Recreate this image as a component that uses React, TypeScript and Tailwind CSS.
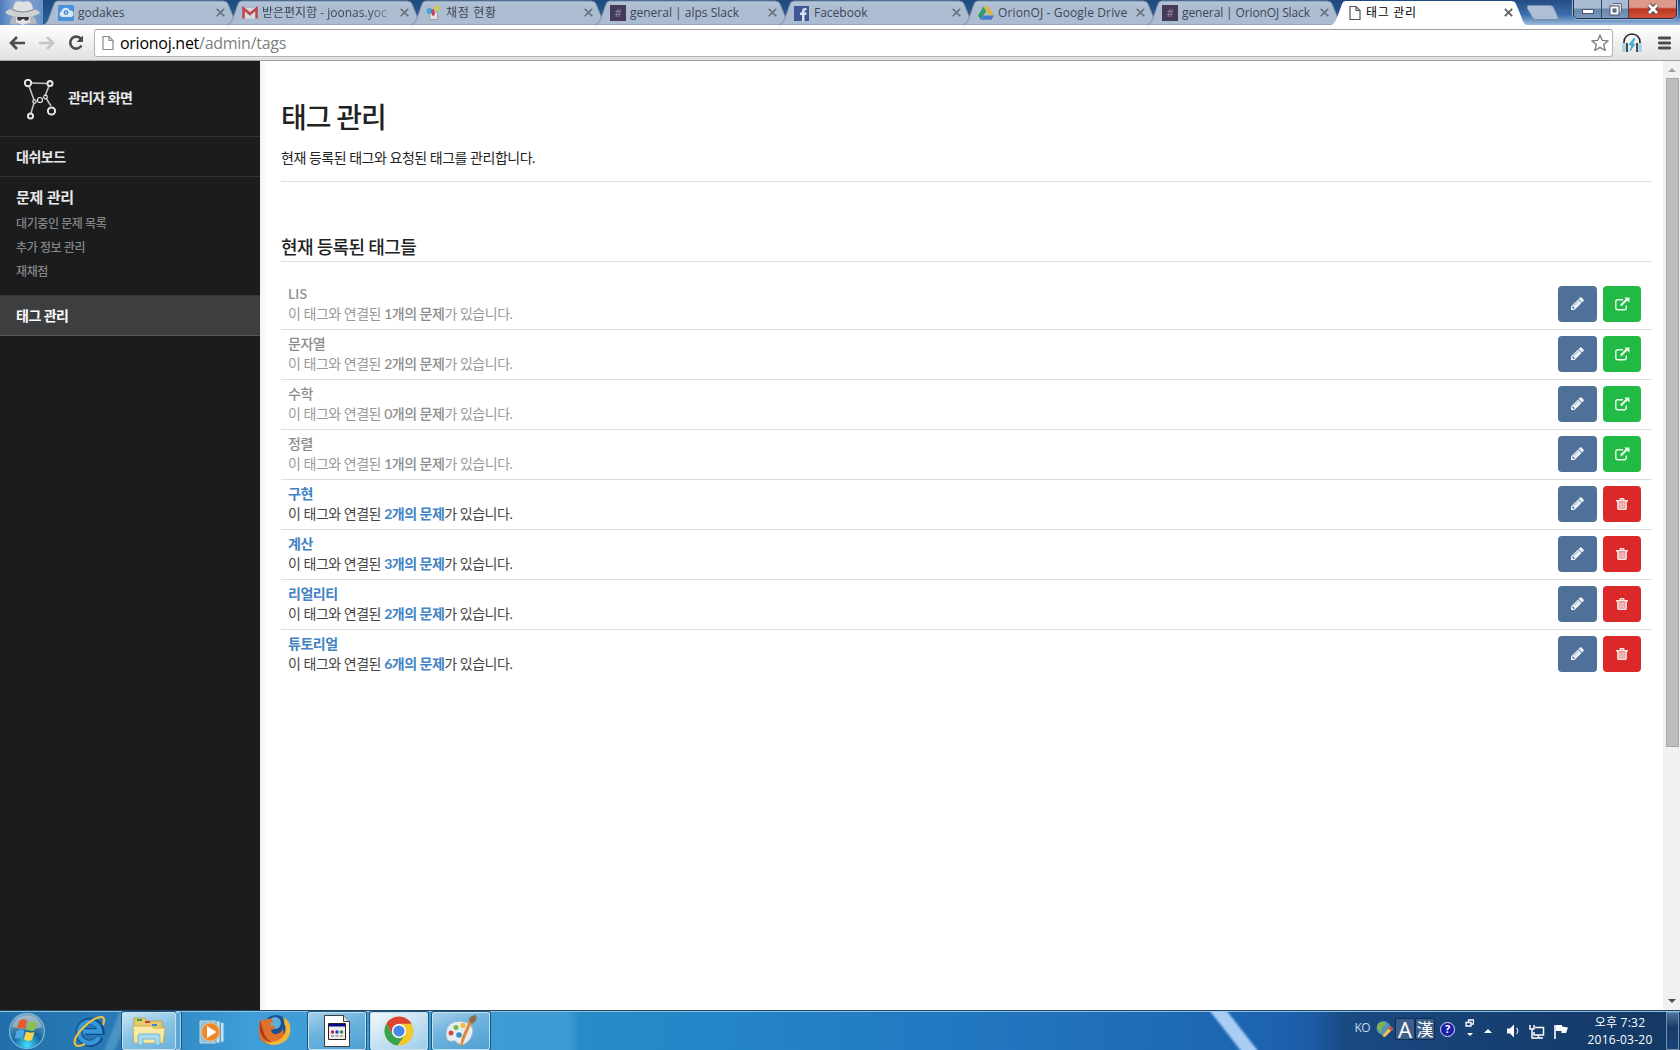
import React from "react";

type Tab = { title: string; icon: React.ReactNode; active?: boolean };

const ui = "font-['Open_Sans','Noto_Sans_CJK_KR',sans-serif]";

function SlackIcon() {
  return (
    <div className="flex h-4 w-4 items-center justify-center bg-[#453a58] text-[11px] leading-4 text-[#9d98b3]">#</div>
  );
}

function PageIcon({ dark }: { dark?: boolean }) {
  return (
    <svg width="12" height="16" viewBox="0 0 12 16" fill="#fff" stroke={dark ? "#555" : "#8a8a8a"} strokeWidth="1.2">
      <path d="M1 1.5h6L11 5.5V14.5H1zM7 1.5V5.5H11" />
    </svg>
  );
}

const tabs: Tab[] = [
  {
    title: "godakes",
    icon: (
      <svg width="16" height="16" viewBox="0 0 16 16">
        <rect width="16" height="16" rx="1.5" fill="#4a90dc" />
        <path d="M4 12a3 3 0 0 1-.5-5.800A4.500 4.500 0 0 1 12 5.500a3.200 3.200 0 0 1 .5 6.500z" fill="#d8e6f4" />
        <circle cx="8" cy="7.500" r="2.300" fill="#3f7fca" />
        <circle cx="8" cy="7.500" r="1" fill="#d8e6f4" />
      </svg>
    ),
  },
  {
    title: "받은편지함 - joonas.yoc",
    icon: (
      <svg width="16" height="16" viewBox="0 0 16 16">
        <path d="M1.500 3h13v10.500h-13z" fill="#d5dae2" />
        <path d="M1.500 13.500V3.500L8 9l6.500-5.500v10" fill="none" stroke="#bd4647" strokeWidth="2.500" />
      </svg>
    ),
  },
  {
    title: "채점 현황",
    icon: (
      <svg width="16" height="16" viewBox="0 0 16 16">
        <path d="M3 7h8.500v7.500H4z" fill="#dfe2e6" stroke="#a09c9c" />
        <circle cx="3.500" cy="6" r="3" fill="#40a9df" />
        <circle cx="11" cy="3" r="2.500" fill="#d4cf35" />
        <path d="M5 5l3-1 1 6-3 1z" fill="#cb3f4e" />
      </svg>
    ),
  },
  { title: "general | alps Slack", icon: <SlackIcon /> },
  {
    title: "Facebook",
    icon: (
      <svg width="16" height="16" viewBox="0 0 16 16">
        <rect y="1" width="15" height="15" fill="#3f5798" />
        <path d="M8 16V10H6V7.500h2V6c0-2.300 1.500-3.300 4.500-3v2.300c-1.600 0-2 .1-2 1v1.200h2l-.3 2.500h-1.700v6z" fill="#dbe2ee" />
      </svg>
    ),
  },
  {
    title: "OrionOJ - Google Drive",
    icon: (
      <svg width="16" height="16" viewBox="0 0 16 16">
        <path d="M5.500 1.500 0 10.500l2.700 4.300L8.200 6z" fill="#2f9c6b" />
        <path d="M5.500 1.500h5L16 10.300h-5.300z" fill="#d9b440" />
        <path d="M5.500 10.500H16l-2.700 4.300H2.700z" fill="#4779d4" />
      </svg>
    ),
  },
  { title: "general | OrionOJ Slack", icon: <SlackIcon /> },
  { title: "태그 관리", icon: <PageIcon dark />, active: true },
];

const tabTracking: Record<string, string> = {
  "받은편지함 - joonas.yoc": "[mask-image:linear-gradient(to_right,#000_105px,rgba(0,0,0,0.25)_131px)]",
  "채점 현황": "tracking-[0.7px]",
  "OrionOJ - Google Drive": "tracking-[0.13px]",
  "general | OrionOJ Slack": "tracking-[-0.12px]",
  "태그 관리": "tracking-[0.7px]",
};

function BrowserTab({ tab }: { tab: Tab }) {
  return (
    <div className="relative h-[25px] w-[184px] shrink-0">
      <svg className="absolute left-0 top-0" width="196" height="25" viewBox="0 0 196 25">
        <defs>
          <linearGradient id="tabfill" x1="0" y1="0" x2="0" y2="1">
            <stop offset="0" stopColor="#b6c6da" />
            <stop offset=".25" stopColor="#adbdd1" />
            <stop offset="1" stopColor="#abbbd2" />
          </linearGradient>
        </defs>
        <path
          d="M0 25C4 24 5 20 7 15L11 4Q12 1 15 1H180Q184 1 185 4L190 16C192 22 193 24 196 25z"
          fill={tab.active ? "#fff" : "url(#tabfill)"}
          stroke={tab.active ? "none" : "#7f8da2"}
          strokeWidth="1"
        />
      </svg>
      <div className={`${ui} relative flex h-[25px] items-center pl-[15px] text-[12px]`}>
        <div className="flex w-5 shrink-0 items-center">
          <div className={tab.active ? "pl-[3px]" : ""}>{tab.icon}</div>
        </div>
        <div
          className={`w-[133px] whitespace-nowrap pt-px leading-6 ${tab.active ? "text-black" : "text-[#3d4756]"} ${
            tabTracking[tab.title] ?? ""
          }`}
        >
          {tab.title}
        </div>
        <svg className="ml-[5px] shrink-0" width="9" height="9" viewBox="0 0 9 9">
          <path d="M.8.800l7.400 7.400M8.200.800L.8 8.200" stroke={tab.active ? "#5e5e5e" : "#6a7482"} strokeWidth="1.700" />
        </svg>
      </div>
    </div>
  );
}

function TabStrip() {
  return (
    <div className="relative flex h-[25px] bg-[linear-gradient(180deg,#1d4a80,#2a609b)]">
      <div className="w-[43px] shrink-0 bg-[linear-gradient(90deg,#4e7cba,#86a7d4_35%,#6a92c8)] pl-[5px]">
        <svg width="36" height="25" viewBox="0 0 36 25">
          <path d="M5 24q0-6 5-9h16q5 3 6 9z" fill="#b4b7bb" />
          <path d="M0 13q2-4 8-4 9 3 20 0 6 1 7 4-5 4-17 4T0 13z" fill="#cfd1d3" />
          <path d="M8 9Q9 2 13 1l5 1 5-1q4 1 5 8-10 5-20 0z" fill="#dfe0e1" />
          <path d="M7 9.500q10 5 22 0" stroke="#8e9298" strokeWidth="1.200" fill="none" />
          <path d="M11 17h14v5l-7 3-7-3z" fill="#e4e5e6" />
          <path d="M12 17h12l-.5 3q-3.500 2-4.500-1h-2q-1 3-4.500 1z" fill="#36383c" />
        </svg>
      </div>
      {tabs.map((t) => (
        <BrowserTab key={t.title} tab={t} />
      ))}
      <div className="flex flex-1 justify-between bg-[linear-gradient(180deg,#234c82,#3d6fae_60%,#9dbbdc)] pl-[8px]">
        <svg className="ml-1 mt-[5px]" width="32" height="16" viewBox="0 0 32 16">
          <path d="M1 .5h22q3 0 4 3l4 9q1 2-2 2H9q-3 0-4-3L0 3Q0 .5 1 .5z" fill="#afc0d6" stroke="#7a8ca6" />
        </svg>
        <div className="mr-[3px] flex h-[19px] overflow-hidden rounded-b-[5px] border border-t-0 border-[#1f2e45] shadow-[0_0_0_1px_#9fb6d2]">
          <div className="flex w-[28px] items-center justify-center border-r border-[#33455f] bg-[linear-gradient(180deg,#a9bcd3_45%,#6a86aa_50%,#7b9ac0)]">
            <svg width="12" height="5" viewBox="0 0 12 5" className="mt-1">
              <rect x=".5" y=".5" width="11" height="4" fill="#fff" stroke="#4b556a" />
            </svg>
          </div>
          <div className="flex w-[27px] items-center justify-center border-r border-[#33455f] bg-[linear-gradient(180deg,#a9bcd3_45%,#6a86aa_50%,#7b9ac0)]">
            <svg width="13" height="13" viewBox="0 0 13 13" fill="none">
              <path d="M4 2h7v7" stroke="#4b556a" strokeWidth="3.400" />
              <path d="M4 2h7v7" stroke="#fff" strokeWidth="1.600" />
              <rect x="2.500" y="4.500" width="6" height="6" stroke="#4b556a" strokeWidth="4" />
              <rect x="2.500" y="4.500" width="6" height="6" stroke="#fff" strokeWidth="2" />
            </svg>
          </div>
          <div className="flex w-[47px] items-center justify-center bg-[linear-gradient(180deg,#dd9a8b_40%,#bd3620_50%,#d0533a)]">
            <svg width="14" height="12" viewBox="0 0 14 12">
              <path d="M3 2l8 8M11 2l-8 8" stroke="#56424b" strokeWidth="4.800" />
              <path d="M3 2l8 8M11 2l-8 8" stroke="#fff" strokeWidth="2.800" />
            </svg>
          </div>
        </div>
      </div>
    </div>
  );
}

function Toolbar() {
  return (
    <div className="flex h-9 items-center border-b border-[#a0a0a0] bg-[linear-gradient(180deg,#fff,#e1e1e1)]">
      <svg className="ml-[9px]" width="17" height="14" viewBox="0 0 17 14" fill="none" stroke="#4c4c4c" strokeWidth="2.600">
        <path d="M16 7H3M8 1L2 7l6 6" />
      </svg>
      <svg className="ml-[13px]" width="17" height="14" viewBox="0 0 17 14" fill="none" stroke="#c6c6c6" strokeWidth="2.600">
        <path d="M0 7h13M8 1l6 6-6 6" />
      </svg>
      <svg className="ml-[12px]" width="16" height="16" viewBox="0 0 16 16">
        <path d="M13 4A6 6 0 1 0 13.500 10.500" fill="none" stroke="#4c4c4c" strokeWidth="2.600" />
        <path d="M15 .5V7H8.500z" fill="#4c4c4c" />
      </svg>
      <div className={`${ui} ml-[10px] flex h-7 w-[1519px] items-center rounded-[3px] border border-[#b5b5b5] border-t-[#a0a0a0] bg-white pl-[7px] text-[16px] text-black`}>
        <PageIcon />
        <div className="ml-[6px] flex-1 leading-6 tracking-[-0.27px]">
          orionoj.net<span className="text-[#808080]">/admin/tags</span>
        </div>
        <svg className="mr-[3px]" width="18" height="18" viewBox="0 0 18 18" fill="#fff" stroke="#7b7b7b" strokeWidth="1.300" strokeLinejoin="round">
          <path d="M9 1l2.300 5.400 5.900.4-4.500 3.800 1.500 5.900L9 13.400l-5.200 3.100 1.500-5.900L.8 6.800l5.900-.4z" />
        </svg>
      </div>
      <svg className="ml-[9px]" width="20" height="20" viewBox="0 0 20 20" fill="none">
        <path d="M2 11V9a8 8 0 0 1 16 0v2" stroke="#222" strokeWidth="1.500" />
        <path d="M2 10v9M18 10v9" stroke="#a6d3e8" strokeWidth="3.500" />
        <path d="M5 10v9M15 10v9" stroke="#222" strokeWidth="1.600" />
        <path d="M12 5L7 12h3l-2 6 5-7h-3l3-5z" fill="#48add0" stroke="#48add0" />
      </svg>
      <svg className="ml-[16px]" width="13" height="14" viewBox="0 0 13 14" stroke="#4d4d4d" strokeWidth="2.800" strokeLinecap="round">
        <path d="M1.300 2h10.400M1.300 7h10.400M1.300 12h10.400" />
      </svg>
    </div>
  );
}

const body = "font-['Lato','Noto_Sans_CJK_KR',sans-serif]";

function Sidebar() {
  return (
    <div className="w-[260px] shrink-0 bg-[#1b1c1d] text-[14px] font-bold text-[#e9e9e9]">
      <div className="flex h-[76px] items-center border-b border-[#2f3031] pl-6">
        <svg className="mt-[2px]" width="33" height="42" viewBox="0 0 33 42" fill="none" stroke="#e8e8e8" strokeWidth="1.600">
          <path d="M7 4l17 .5M5 7l5 14M25 7l-4 10M10 24L7 34M22 19l5 8" stroke="#c0c0c0" />
          <circle cx="4" cy="4" r="3.200" strokeWidth="2" />
          <circle cx="26" cy="4.500" r="2.500" strokeWidth="2" />
          <circle cx="10.500" cy="22.500" r="1.700" strokeWidth="1.200" />
          <circle cx="16" cy="21" r="2.500" strokeWidth="1.200" />
          <circle cx="21.500" cy="18" r="1.800" strokeWidth="1.200" />
          <circle cx="27.500" cy="32" r="3.600" strokeWidth="2" />
          <circle cx="6.500" cy="37" r="2.500" strokeWidth="2" />
        </svg>
        <span className="-mt-[2px] ml-[11px] tracking-[-0.6px]">관리자 화면</span>
      </div>
      <div className="flex h-10 items-center border-b border-[#2f3031] pl-4 tracking-[-0.5px]">대쉬보드</div>
      <div className="h-[119px] border-b border-[#353637] pl-4 pt-[8px]">
        <div className="text-[15px] leading-6 tracking-[-0.2px]">문제 관리</div>
        <div className="mt-[3px] text-[12px] font-medium leading-6 tracking-[-0.4px] text-[#858586]">
          <div>대기중인 문제 목록</div>
          <div>추가 정보 관리</div>
          <div>재채점</div>
        </div>
      </div>
      <div className="flex h-10 items-center border-b border-[#58595a] bg-[#3d3e3f] pl-4 tracking-[-0.5px] text-white">태그 관리</div>
    </div>
  );
}

const rows = [
  { name: "LIS", count: 1, on: false },
  { name: "문자열", count: 2, on: false },
  { name: "수학", count: 0, on: false },
  { name: "정렬", count: 1, on: false },
  { name: "구현", count: 2, on: true },
  { name: "계산", count: 3, on: true },
  { name: "리얼리티", count: 2, on: true },
  { name: "튜토리얼", count: 6, on: true },
];

function TagRow({ row, last }: { row: (typeof rows)[number]; last: boolean }) {
  const link = row.on ? "font-bold text-[#4183c4]" : "font-medium text-[#8c8c8c]";
  return (
    <div className={`flex h-[50px] items-center border-b pb-[2px] pl-[7px] pr-[11px] ${last ? "border-transparent" : "border-[#dcdddd]"}`}>
      <div className={`flex-1 text-[14px] leading-5 tracking-[-0.48px] ${row.on ? "text-[#444]" : "text-[#999]"}`}>
        <div className={`${link} ${row.name === "LIS" ? "tracking-[0.1px]" : ""}`}>{row.name}</div>
        <div>
          이 태그와 연결된 <span className={link}>{row.count}개의 문제</span>가 있습니다.
        </div>
      </div>
      <div className="flex h-9 w-[39px] items-center justify-center rounded-[4px] bg-[#4f7199]">
        <svg width="13" height="13" viewBox="0 0 1536 1536" fill="#eef2f6">
          <path d="M363 1408l91-91-235-235-91 91v107h128v128h107zM886 480q0-22-22-22-10 0-17 7L305 1007q-7 7-7 17 0 22 22 22 10 0 17-7l542-542q7-7 7-17zM832 288l416 416-832 832H0v-416zM1515 384q0 53-37 90l-166 166-416-416 166-165q36-38 90-38 53 0 91 38l235 234q37 39 37 91z" />
        </svg>
      </div>
      <div className={`ml-[6px] flex h-9 w-[38px] items-center justify-center rounded-[4px] ${row.on ? "bg-[#db2828]" : "bg-[#21ba45]"}`}>
        {row.on ? (
          <svg width="12" height="12" viewBox="0 0 12 12" fill="none" stroke="#fbeaea">
            <path d="M0 2.700h12M3.800 2.500l.7-1.800h3l.7 1.800" strokeWidth="1.400" />
            <path d="M1.900 3V10.300q0 1.100 1.100 1.100h6q1.100 0 1.100-1.100V3" strokeWidth="1.500" fill="#ee9090" />
            <path d="M4.200 4.500v5.500M6 4.500v5.500M7.800 4.500v5.500" strokeWidth=".7" />
          </svg>
        ) : (
          <svg width="15" height="14" viewBox="0 0 15 14" fill="none" stroke="#eefaf0">
            <path d="M8 2.700H2.800Q.8 2.700.8 4.700v6q0 2 2 2h6.500q2 0 2-2V8.500" strokeWidth="1.400" />
            <path d="M5.800 8.500l6-6" strokeWidth="2.200" />
            <path d="M9.300.5H14.500V5.700z" fill="#eefaf0" stroke="none" />
          </svg>
        )}
      </div>
    </div>
  );
}

function Content() {
  return (
    <div className="flex-1 bg-[linear-gradient(90deg,#f4f4f4,#fff_8px)] pl-[21px] pr-[11px] text-[#222]">
      <div className="h-[121px] border-b border-[#dcdddd] pt-[36px]">
        <h1 className="text-[28px] font-medium leading-[40px] tracking-[-1.1px]">태그 관리</h1>
        <p className="mt-[11px] text-[14px] leading-5 tracking-[-0.48px]">현재 등록된 태그와 요청된 태그를 관리합니다.</p>
      </div>
      <h2 className="mb-[18px] flex h-20 items-end border-b border-[#dcdddd] pb-px text-[18px] font-medium leading-[26px] tracking-[-0.65px]">현재 등록된 태그들</h2>
      {rows.map((r, i) => (
        <TagRow key={r.name} row={r} last={i === rows.length - 1} />
      ))}
    </div>
  );
}

function Scrollbar() {
  return (
    <div className="flex w-[17px] shrink-0 flex-col items-center justify-between bg-[#f1f1f1] pl-px">
      <div className="flex h-[17px] items-center">
        <svg width="8" height="4" viewBox="0 0 8 4"><path d="M0 4l4-4 4 4z" fill="#a3a3a3" /></svg>
      </div>
      <div className="h-[669px] w-[13px] border border-[#a8a8a8] bg-[#bcbcbc]" />
      <div className="flex-1" />
      <div className="flex h-[19px] items-center">
        <svg width="8" height="4" viewBox="0 0 8 4"><path d="M0 0h8L4 4z" fill="#505050" /></svg>
      </div>
    </div>
  );
}

const taskButton =
  "flex h-[38px] items-center justify-center rounded-[2px] border border-[#c3e0f1] shadow-[0_0_0_1px_#1f5680]";

function Taskbar() {
  return (
    <div className="relative flex h-10 items-start overflow-hidden border-t border-[#24465f] bg-[linear-gradient(90deg,#236fab_0px,#287bb7_120px,#3f9ed7_250px,#3b9bd2_568px,#288bc8_580px,#2383c6_760px,#227ac2_920px,#2070ba_1080px,#1d64b0_1260px,#1c5ca6_1310px,#194a82_1345px,#163f72_1500px,#133864)] shadow-[inset_0_1px_0_#8fc0e0]">
      <svg className="absolute left-0 top-0" width="1680" height="40" viewBox="0 0 1680 40">
        <defs>
          <filter id="soft" x="-20%" y="-20%" width="140%" height="140%">
            <feGaussianBlur stdDeviation="1.3" />
          </filter>
        </defs>
        <path d="M1206 -5h17l39 50h-17z" fill="#a8cef5" filter="url(#soft)" />
        <path d="M120 0l-16 40h10L132 0z" fill="#7bb9dc" opacity=".4" filter="url(#soft)" />
      </svg>
      <div className="relative flex h-10 w-full items-start pt-px">
        <svg className="ml-2" width="38" height="38" viewBox="0 0 38 38">
          <defs>
            <radialGradient id="orb" cx=".5" cy=".9" r=".9">
              <stop offset="0" stopColor="#3fe0ff" />
              <stop offset=".45" stopColor="#15689f" />
              <stop offset="1" stopColor="#8fa9bd" />
            </radialGradient>
          </defs>
          <circle cx="19" cy="19" r="17.500" fill="url(#orb)" stroke="#6fb5d6" strokeWidth="1.300" />
          <path d="M4 15a15.500 15.500 0 0 1 30 0q-15 6-30 0z" fill="#dce6ec" opacity=".4" />
          <path d="M11 9q4-3 8-.5L17 17q-4-2-8 0z" fill="#e8592b" />
          <path d="M20.500 9q4 2.500 9 .5L27 18q-4 2-8.500-.5z" fill="#8fc04a" />
          <path d="M8.500 19q4-2.500 8-.5l-2 8.500q-4-2-8 0z" fill="#4ea6e2" />
          <path d="M18 19.500q4 2 8.500.5L24 28q-4 2-8-.5z" fill="#fbd24a" />
        </svg>
        <svg className="ml-[26px] mt-1" width="34" height="32" viewBox="0 0 34 32">
          <path d="M28 21A11 11 0 1 1 29 15.500H13" fill="none" stroke="#124d84" strokeWidth="7" />
          <path d="M27 21A10.500 10.500 0 1 1 28 15.500H11" fill="none" stroke="#3497dc" strokeWidth="4.500" />
          <path d="M31 9Q34 1 29 1C18 2 0 21 3 28q2 4 10 0" fill="none" stroke="#e9c13e" strokeWidth="2.200" />
        </svg>
        <div className="ml-[16px] flex">
          <div className={`${taskButton} w-[54px] bg-[linear-gradient(160deg,#c9e3f2,#88c3e4_50%,#69b2de)]`}>
            <svg width="34" height="30" viewBox="0 0 34 30">
              <path d="M2 5V2h11l2 3h15v5l2 1v15H2z" fill="#e6c969" stroke="#b99b45" strokeWidth=".8" />
              <path d="M5 3h5v2H5z" fill="#37a547" />
              <path d="M13 5h5v2h-5z" fill="#cb4232" />
              <path d="M20 8h5v2h-5z" fill="#348ad0" />
              <path d="M1 10h18l3 2h11L31 27H2z" fill="#f8e9a5" stroke="#c6a957" strokeWidth=".8" />
              <path d="M6 29v-9q0-2 2-2h18q2 0 2 2v9h-5v-6H11v6z" fill="#a8daee" stroke="#5fabce" strokeWidth=".8" />
            </svg>
          </div>
          <div className="h-[38px] w-[5px] rounded-r-[2px] border border-l-0 border-[#a8d0e9] bg-[#5aa8d8] shadow-[1px_0_0_#1f5680]" />
        </div>
        <svg className="ml-[18px] mt-2" width="30" height="25" viewBox="0 0 30 25">
          <path d="M1 1h16v22H1z" fill="#8fc0dd" stroke="#bfdbea" />
          <path d="M17 1h4v22h-4zM21.500 2.500H25V22h-3.500z" fill="#c5e1f1" stroke="#5ba0c8" />
          <circle cx="11.500" cy="12" r="9" fill="#f08626" stroke="#fbb76b" />
          <path d="M8 6l9.500 6L8 18z" fill="#fff" />
        </svg>
        <svg className="ml-[30px] mt-[2px]" width="33" height="32" viewBox="0 0 33 32">
          <circle cx="17" cy="14.500" r="13.500" fill="#1f4f8f" />
          <circle cx="16" cy="9" r="6" fill="#5bb0dd" />
          <path d="M1.500 5q2 2 4 1.500Q9 3 13 6l2 2q-4 0-4 3l5 1q0 3-4 4 1 5 6 4 4-1 6-5 3 10-5 14-10 4-17-3Q-2 19 1.500 5z" fill="#e0702a" />
          <path d="M24 3q8 4 7.500 13-1 11-11 14-9 3-15-3 11 3 18-4 5-6 2-13-.5-4-1.500-7z" fill="#f2b637" />
          <path d="M1.500 6q-2.500 11 3 18 4 4 8 5-7-6-8-11-2-6-3-12z" fill="#a83c1c" />
        </svg>
        <div className={`${taskButton} ml-[16px] w-[58px] bg-[linear-gradient(160deg,#a6d0ea,#6fb5df_40%,#4d9fd2)]`}>
          <svg width="26" height="32" viewBox="0 0 26 32">
            <path d="M.5.500H19.500L25.500 6.500V31.500H.5z" fill="#fff" stroke="#3c3c3c" />
            <path d="M19.500.500V6.500H25.500" fill="#d9d9d9" stroke="#3c3c3c" />
            <path d="M4.500 8.500h17v16h-17z" fill="#ececec" stroke="#222" />
            <path d="M5 9h16v2.500H5z" fill="#0a0a88" />
            <circle cx="8.500" cy="17" r="1.700" fill="#c82048" /><circle cx="13" cy="17" r="1.700" fill="#2238c2" /><circle cx="17.500" cy="17" r="1.700" fill="#259444" />
            <path d="M7 21h3M11.500 21h3M16 21h3" stroke="#777" />
          </svg>
        </div>
        <div className={`${taskButton} ml-[4px] w-[58px] bg-[linear-gradient(150deg,#f2f8fb,#c7e2f2_50%,#9ccdea)]`}>
          <svg width="30" height="30" viewBox="0 0 30 30">
            <circle cx="15" cy="15" r="14.500" fill="#f5c72c" />
            <path d="M2.500 7.500A14.500 14.500 0 0 1 27.600 7.800H15a7.200 7.200 0 0 0-6.300 10.700z" fill="#d94435" />
            <path d="M2.400 7.700A14.500 14.500 0 0 0 13.500 29.400L21 18.800a7.200 7.200 0 0 1-12.300-.2z" fill="#36a350" />
            <circle cx="15" cy="15" r="7" fill="#fff" />
            <circle cx="15" cy="15" r="5.600" fill="#4688ee" />
          </svg>
        </div>
        <div className={`${taskButton} ml-[4px] w-[58px] bg-[linear-gradient(160deg,#a6d0ea,#6fb5df_40%,#4d9fd2)]`}>
          <svg width="32" height="32" viewBox="0 0 32 32">
            <path d="M16 6Q1 6 1 19q0 9 7 7 3-1 4 2 7 5 14-5Q33 9 16 6z" fill="#e3edf4" stroke="#a1b4c4" />
            <circle cx="6" cy="18" r="2.500" fill="#d84a3f" /><circle cx="11" cy="12.500" r="2.500" fill="#7bb546" />
            <circle cx="18" cy="10.500" r="2.500" fill="#edba3a" /><circle cx="14" cy="20" r="2.800" fill="#3b8fc9" />
            <path d="M28 5l-8 18-3 8h-2l2-9 8-18z" fill="#e48836" />
            <path d="M24 6q-1-5 7-6 2 5-4 9z" fill="#94694c" />
          </svg>
        </div>
        <div className={`${ui} ml-auto flex h-[38px] items-center text-white`}>
          <span className="mt-[-6px] text-[12px] leading-4 tracking-[-0.6px] text-[#c6d7ea]">KO</span>
          <svg className="-mt-1 ml-[6px]" width="17" height="18" viewBox="0 0 17 18">
            <circle cx="7.500" cy="8" r="7" fill="#5594b5" />
            <path d="M2 4q5-4 8 0l-4 3-1 6-4-5z" fill="#84b54c" />
            <path d="M6 16l8-9 3 2-8 8z" fill="#f3c14e" /><path d="M12 8l3-2 2 2-2 3z" fill="#cf4a3a" />
          </svg>
          <div className="-mt-1 ml-[2px] flex h-[22px] w-[20px] items-center justify-center rounded-[2px] border border-[#0f2d55] bg-[#3c5e88] font-['Open_Sans',sans-serif] text-[22px] leading-5">A</div>
          <div className="-mt-1 flex h-[22px] w-[20px] items-center justify-center rounded-[2px] border border-[#0f2d55] bg-[#3c5e88] font-['Noto_Sans_CJK_KR',sans-serif] text-[17px] leading-5">漢</div>
          <div className="-mt-1 ml-[5px] flex h-[15px] w-[15px] items-center justify-center rounded-full border border-[#d9dcf1] bg-[#1a1faa] text-[11px] font-bold leading-3">?</div>
          <svg className="ml-[10px] mt-[-6px]" width="9" height="18" viewBox="0 0 9 18" fill="none" stroke="#fff" strokeWidth="1.300">
            <path d="M3.500 3.500V1h5v4H6M1 3.500h5v3.500H1z" /><path d="M2 14h6l-3 3z" fill="#fff" stroke="none" />
          </svg>
          <svg className="ml-[10px] mt-0" width="8" height="4" viewBox="0 0 8 4"><path d="M0 4l4-4 4 4z" fill="#fff" /></svg>
          <svg className="ml-[15px] mt-0" width="13" height="14" viewBox="0 0 13 14">
            <path d="M0 4.500h3L7 .5v13l-4-4H0z" fill="#fff" /><path d="M9.500 4q2.500 3 0 6" fill="none" stroke="#cbd7e6" strokeWidth="1.200" />
          </svg>
          <svg className="ml-[9px] mt-0" width="16" height="15" viewBox="0 0 16 15" fill="none" stroke="#fff" strokeWidth="1.500">
            <path d="M6 3.500h8.500v7.500H5V8M5 14h9M9.500 11v3M1 1v4h4V1M3 5v9h2" />
          </svg>
          <svg className="ml-[9px] mt-0" width="15" height="15" viewBox="0 0 15 15">
            <path d="M1 1v14" stroke="#fff" strokeWidth="1.600" /><path d="M2 1h6v1.500l6 1L12 9H7.500V7H2z" fill="#fff" />
          </svg>
          <div className="ml-[16px] w-[70px] text-center text-[12px] leading-[17px] tracking-[0.25px]">
            <div>오후 7:32</div>
            <div>2016-03-20</div>
          </div>
          <div className="ml-[11px] mr-px h-[38px] w-[13px] border border-[#7190b3] bg-[linear-gradient(180deg,#4f7299,#163b68_40%,#1a4477)]" />
        </div>
      </div>
    </div>
  );
}

export default function App() {
  return (
    <div lang="ko" className="flex h-[1050px] w-[1680px] flex-col overflow-hidden bg-white">
      <TabStrip />
      <Toolbar />
      <div className={`${body} flex min-h-0 flex-1`}>
        <Sidebar />
        <Content />
        <Scrollbar />
      </div>
      <Taskbar />
    </div>
  );
}
